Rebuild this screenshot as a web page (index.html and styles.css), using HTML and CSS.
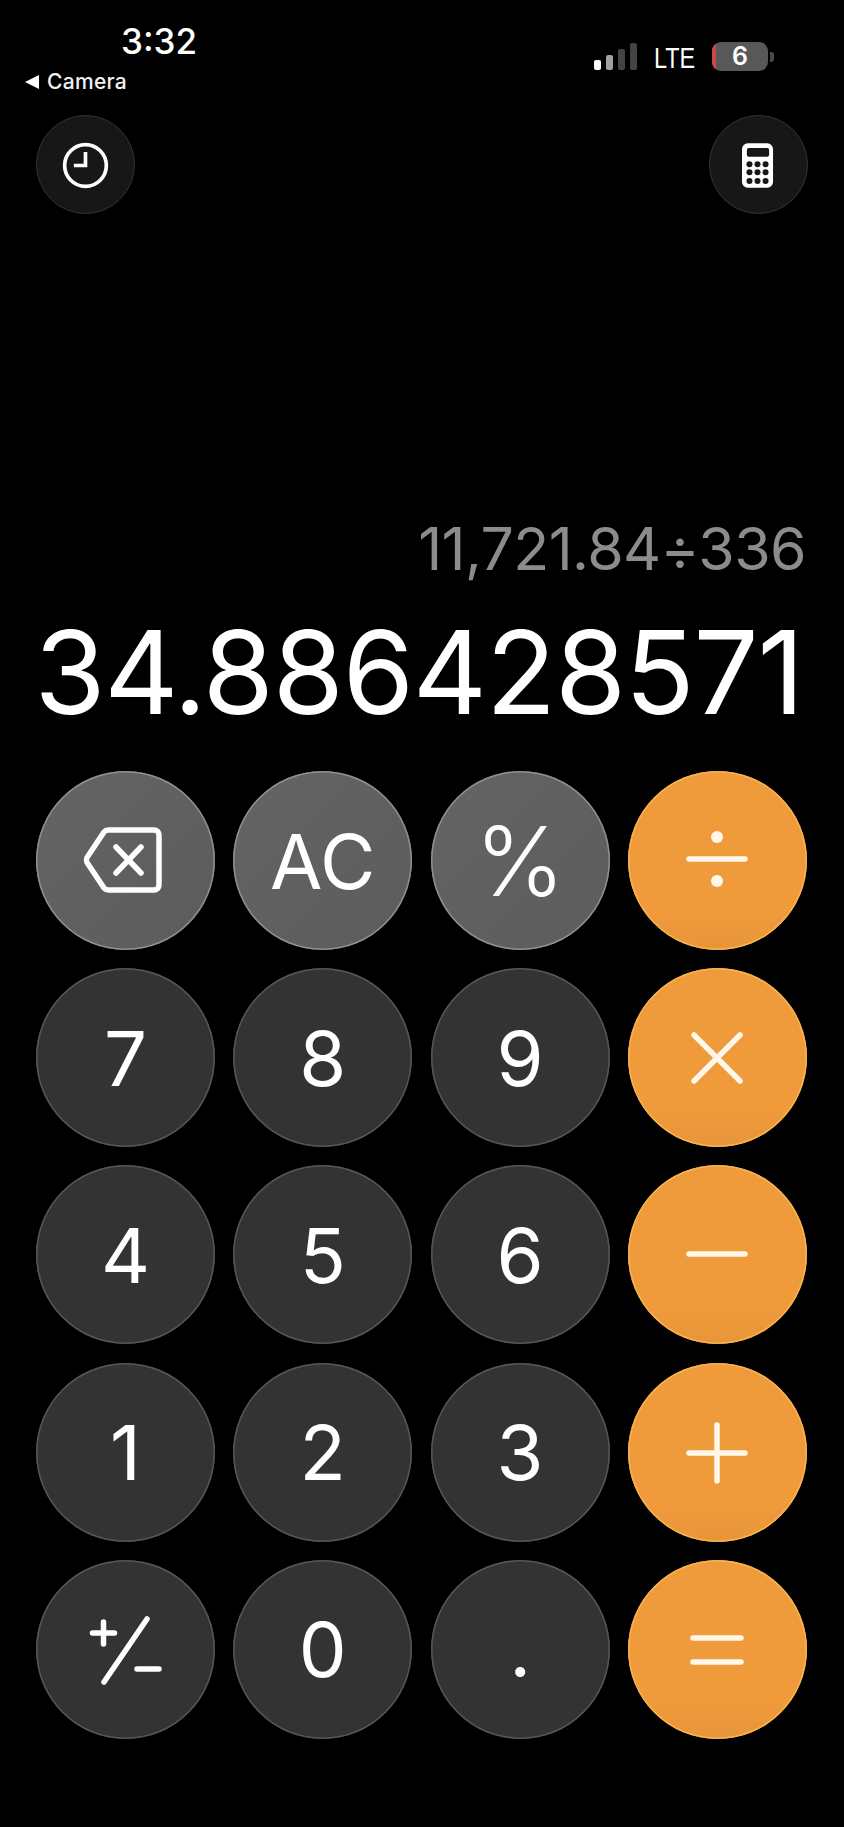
FILE: index.html
```html
<!DOCTYPE html>
<html lang="en">
<head>
<meta charset="utf-8">
<title>Calculator</title>
<link rel="stylesheet" href="styles.css">
</head>
<body>
<main class="app">
  <header class="status">
    <div class="status-left">
      <div class="time">3:32</div>
      <div class="back"><span class="back-arrow"></span><span>Camera</span></div>
    </div>
    <div class="status-right">
      <div class="signal"><i class="bar b1"></i><i class="bar b2"></i><i class="bar b3"></i><i class="bar b4"></i></div>
      <span class="lte">LTE</span>
      <div class="battery"><div class="battery-body"><span class="battery-level"></span><span class="battery-num">6</span></div><span class="battery-nub"></span></div>
    </div>
  </header>

  <nav class="tools">
    <button class="tool" aria-label="History">
      <svg viewBox="0 0 99 99"><circle class="line thin" cx="50" cy="50" r="21.5"/><path class="line thin" d="M50 36V50H38"/></svg>
    </button>
    <button class="tool" aria-label="Calculator mode">
      <svg viewBox="0 0 99 99">
        <rect class="solid" x="33" y="27" width="32" height="46" rx="6"/>
        <rect class="cut" x="38" y="32" width="23" height="9" rx="2"/>
        <g class="cut">
          <circle cx="40.7" cy="48.7" r="3.1"/><circle cx="49" cy="48.7" r="3.1"/><circle cx="57.3" cy="48.7" r="3.1"/>
          <circle cx="40.7" cy="57" r="3.1"/><circle cx="49" cy="57" r="3.1"/><circle cx="57.3" cy="57" r="3.1"/>
          <circle cx="40.7" cy="66" r="3.1"/><circle cx="49" cy="66" r="3.1"/><circle cx="57.3" cy="66" r="3.1"/>
        </g>
      </svg>
    </button>
  </nav>

  <section class="display">
    <div class="expression">11,721.84÷336</div>
    <div class="result">34.886428571</div>
  </section>

  <section class="keys">
    <button class="key fn" aria-label="Delete">
      <svg viewBox="0 0 179 179"><path class="line" d="M73 59H118A5 5 0 0 1 123 64V114A5 5 0 0 1 118 119H73A6 6 0 0 1 68 117L52 93A6 6 0 0 1 52 85L68 61A6 6 0 0 1 73 59Z"/><path class="line" d="M80 76L105 102M105 76L80 102"/></svg>
    </button>
    <button class="key fn">AC</button>
    <button class="key fn pct">%</button>
    <button class="key op" aria-label="Divide">
      <svg viewBox="0 0 179 179"><path class="line" d="M61 88H117"/><circle class="solid" cx="89" cy="66" r="6"/><circle class="solid" cx="89" cy="110" r="6"/></svg>
    </button>

    <button class="key">7</button>
    <button class="key">8</button>
    <button class="key">9</button>
    <button class="key op" aria-label="Multiply">
      <svg viewBox="0 0 179 179"><path class="line" d="M66 67L112 113M112 67L66 113"/></svg>
    </button>

    <button class="key">4</button>
    <button class="key">5</button>
    <button class="key">6</button>
    <button class="key op" aria-label="Subtract">
      <svg viewBox="0 0 179 179"><path class="line" d="M61 89H117"/></svg>
    </button>

    <button class="key">1</button>
    <button class="key">2</button>
    <button class="key">3</button>
    <button class="key op" aria-label="Add">
      <svg viewBox="0 0 179 179"><path class="line" d="M61 90H117M89 62V118"/></svg>
    </button>

    <button class="key" aria-label="Toggle sign">
      <svg viewBox="0 0 179 179"><path class="line" d="M56.500 73H78.500M67.500 62V84M111 59L68 122M101 109H123"/></svg>
    </button>
    <button class="key">0</button>
    <button class="key">.</button>
    <button class="key op" aria-label="Equals">
      <svg viewBox="0 0 179 179"><path class="line" d="M65 78H113M65 102H113"/></svg>
    </button>
  </section>
</main>
</body>
</html>
```
FILE: styles.css
```css
* { box-sizing: border-box; }
html, body { margin: 0; padding: 0; background: #000; }
body { width: 844px; height: 1827px; overflow: hidden; font-family: Inter, "Liberation Sans", sans-serif; color: #fff; }
.app { display: flex; flex-direction: column; height: 1827px; }

/* status bar */
.status { display: flex; justify-content: space-between; align-items: flex-start; height: 115px; padding: 0 70px 0 25px; }
.status-left { display: flex; flex-direction: column; padding-top: 20px; }
.time { margin-left: 96px; font-size: 35px; line-height: 42px; font-weight: 500; }
.back { display: flex; align-items: center; gap: 8px; font-size: 21px; line-height: 24px; height: 24px; margin-top: 8px; font-weight: 500; letter-spacing: 0.3px; color: #f2f2f2; }
.back-arrow { width: 0; height: 0; border-style: solid; border-width: 7px 14px 7px 0; border-color: transparent #fff transparent transparent; }
.status-right { display: flex; align-items: flex-start; padding-top: 42px; }
.signal { display: flex; align-items: flex-end; gap: 5px; height: 28px; margin-right: 17px; }
.bar { display: block; width: 7px; border-radius: 2px; }
.b1 { height: 10px; background: #fff; }
.b2 { height: 15px; background: #a0a0a0; }
.b3 { height: 21px; background: #444; }
.b4 { height: 27px; background: #444; }
.lte { display: block; width: 40px; margin-top: 1px; margin-right: 18px; font-family: "Liberation Sans", sans-serif; font-size: 30px; line-height: 29px; transform: scaleX(0.78); transform-origin: left center; }
.battery { display: flex; align-items: center; gap: 2px; height: 29px; }
.battery-body { display: flex; justify-content: center; align-items: center; width: 56px; height: 29px; border-radius: 9px; background: #585858; overflow: hidden; position: relative; }
.battery-level { position: absolute; left: 0; top: 0; bottom: 0; width: 4px; background: #c9494b; }
.battery-num { font-size: 25px; line-height: 29px; font-weight: 600; }
.battery-nub { width: 4px; height: 10px; border-radius: 0 3px 3px 0; background: #4a4a4a; }

/* top tools */
.tools { display: flex; justify-content: space-between; padding: 0 36px; }
.tool { width: 99px; height: 99px; padding: 0; border: 1.5px solid #333; border-radius: 50%; background: #171717; }
.tool svg { display: block; width: 96px; height: 96px; }
.tool .cut { fill: #171717; }

/* display */
.display { flex: none; height: 557px; display: flex; flex-direction: column; justify-content: flex-end; align-items: flex-end; padding-right: 40px; }
.expression { font-size: 59px; line-height: 70px; color: #8c8c8c; margin-right: -2px; margin-bottom: 19px; font-weight: 400; letter-spacing: -0.6px; }
.result { font-size: 115px; line-height: 140px; margin-right: 1px; margin-bottom: 28px; font-weight: 400; letter-spacing: -1.2px; }

/* keypad */
.keys { display: grid; grid-template-columns: repeat(4, 179px); grid-auto-rows: 179px; column-gap: 18.3px; row-gap: 18.2px; padding-left: 36px; }
.key { display: flex; justify-content: center; align-items: center; padding: 0; border: 0; border-radius: 50%; background: #333; box-shadow: inset 0 0 0 1.5px #565656; color: #fff; font-family: inherit; font-size: 76px; line-height: 1; font-weight: 400; }
.key svg { display: block; width: 179px; height: 179px; }
.fn { background: linear-gradient(135deg, #646464, #5c5c5c); box-shadow: inset 0 0 0 1.5px #8f8f8f; }
.pct { font-size: 96px; font-weight: 300; }
.op { background: linear-gradient(180deg, #ef9a3b 80%, #e7953a 100%); box-shadow: inset 0 0 0 1.5px #f7b44e; color: #fff8ea; }

/* icon paint */
.line { fill: none; stroke: #fff; stroke-width: 5.5; stroke-linecap: round; stroke-linejoin: round; }
.thin { stroke-width: 3.8; stroke-linecap: butt; stroke-linejoin: miter; }
.solid { fill: #fff; }
.op .line { stroke: #fff8ea; }
.op .solid { fill: #fff8ea; }
```
